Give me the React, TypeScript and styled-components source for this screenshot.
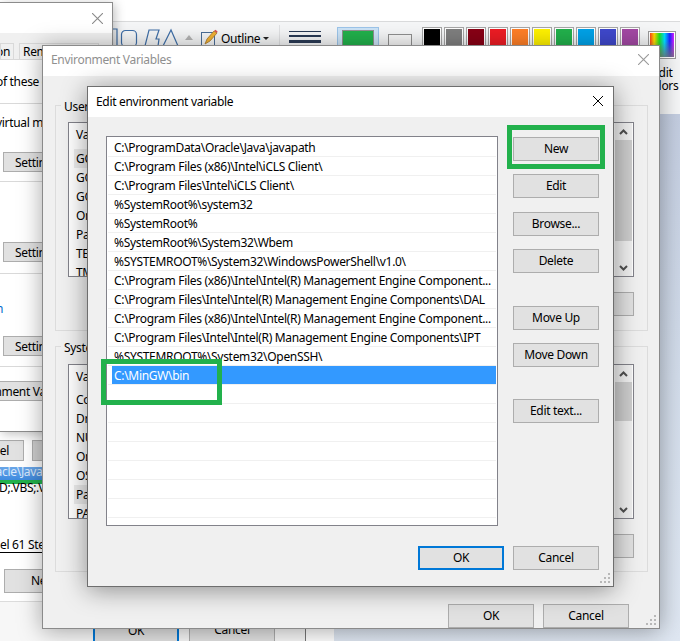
import React from "react";
import styled, { createGlobalStyle } from "styled-components";

const Global = createGlobalStyle`
  html, body { margin: 0; padding: 0; background: #fff; }
  * { box-sizing: border-box; }
  body { font-family: "Noto Sans", "Open Sans", sans-serif; font-size: 12px; color: #000; letter-spacing: -0.31px; }
`;

const Stage = styled.div`
  position: relative;
  width: 680px;
  height: 641px;
  overflow: hidden;
  display: flex;
  flex-direction: column;
  background: #fff;
`;
const TopBlank = styled.div`height: 22px; background: #fff; border-bottom: 1px solid #dadbdc; flex: none;`;
const Ribbon = styled.div`
  height: 92px; flex: none; background: #f5f6f7; display: flex; align-items: flex-start; padding: 5px 0 0 113px; white-space: nowrap;
`;
const Desktop = styled.div`flex: 1; background: linear-gradient(180deg, #c3cde0 0%, #d2dcea 50%, #dfe7f2 100%);`;

const ShapesBox = styled.div`display: flex; width: 68px; margin-top: 1px;`;
const ScrollStep = styled.div`width: 14px; height: 18px; margin-left: 1px; display: flex; justify-content: center; padding-top: 8px;`;
const Tool = styled.div`display: flex; align-items: center; gap: 3px; margin: 1px 0 0 5px; height: 20px; font-size: 12px;`;
const Caret = styled.span`width: 0; height: 0; border: 3px solid transparent; border-top: 3px solid #222; border-bottom: 0; margin-left: 0;`;
const RibbonRule = styled.div`width: 1px; height: 32px; background: #e0e1e3; margin: -2px 9px 0 10px;`;
const LineStack = styled.div`display: flex; flex-direction: column; gap: 3px; width: 32px; padding-top: 4px; margin-right: 16px;`;
const Line = styled.div<{ $h: number }>`height: ${p => p.$h}px; background: #2a3a55;`;
const ActiveColor = styled.div`width: 42px; height: 32px; background: #cde4f7; border: 1px solid #9cc5ea; padding: 3px 5px; margin-right: 9px;`;
const ColorFill = styled.div`height: 100%; background: #22b14c; outline: 1px solid #8f8f8f;`;
const BackColor = styled.div`width: 24px; height: 20px; margin: 7px 10px 0 0; background: #f7f7f7; border: 1px solid #8f8f8f;`;
const Palette = styled.div`display: flex; gap: 2px; margin: 0;`;
const Swatch = styled.div<{ $c: string }>`width: 20px; height: 20px; border: 1px solid #a6a6a6; box-shadow: inset 0 0 0 1px #fff; background: ${p => p.$c};`;
const EditColors = styled.div`display: flex; flex-direction: column; align-items: center; margin: 4px 0 0 7px; width: 30px; line-height: 13px; text-align: center; font-size: 12px; white-space: normal;`;
const Rainbow = styled.div`
  width: 28px; height: 28px; flex: none; border: 1px solid #9a9a9a; outline: 1px solid #fff; outline-offset: -2px; margin-bottom: 7px;
  background: linear-gradient(180deg, transparent 0%, transparent 35%, rgba(120,120,120,.85) 100%),
    linear-gradient(90deg, #ff2020, #ffd800, #20e020, #00d8ff, #2020ff, #ff20ff);
`;

const TopDialog = styled.div`
  position: absolute; left: 0; top: 2px; width: 113px; height: 430px; background: #fff;
  border: 1px solid #8c8c8c; border-left: 0; box-shadow: 2px 2px 10px rgba(0,0,0,.25); display: flex; flex-direction: column; white-space: nowrap; overflow: hidden;
`;
const TopTitle = styled.div`height: 30px; flex: none; display: flex; justify-content: flex-end; align-items: center; padding-right: 9px;`;
const TabBand = styled.div`height: 27px; flex: none; background: #f0f0f0; display: flex; gap: 5px; padding-top: 10px; border-bottom: 1px solid #d9d9d9;`;
const Tab = styled.div<{ $w: number }>`
  width: ${p => p.$w}px; height: 17px; line-height: 16px; border: 1px solid #d9d9d9; border-bottom: 0; overflow: hidden; display: flex; justify-content: flex-end; padding: 0 3px;
`;
const TabWide = styled.div<{ $w: number }>`
  width: ${p => p.$w}px; height: 17px; line-height: 16px; border: 1px solid #d9d9d9; border-bottom: 0; overflow: hidden; padding: 0 3px;
`;
const Section = styled.div<{ $h: number; $last?: boolean }>`
  height: ${p => p.$h}px; flex: none; position: relative; overflow: hidden; display: flex; flex-direction: column;
  border-bottom: ${p => (p.$last ? "0" : "1px solid #d9d9d9")};
`;
const ClipText = styled.div<{ $top: number; $link?: boolean }>`
  margin: ${p => p.$top}px 0 0 -4px; height: 16px; line-height: 16px; color: ${p => (p.$link ? "#0066cc" : "#000")};
`;
const BackButton = styled.div<{ $top: number; $left?: number; $w?: number; $h?: number; $indent?: number }>`
  flex: none; margin: ${p => p.$top}px 0 0 ${p => p.$left ?? 3}px; width: ${p => p.$w ?? 60}px; height: ${p => p.$h ?? 20}px;
  background: #e1e1e1; border: 1px solid #adadad; line-height: 19px; text-indent: ${p => p.$indent ?? 11}px; overflow: hidden;
`;
const LowerDialog = styled.div`
  position: absolute; left: 0; top: 432px; width: 306px; height: 209px; background: #f7f7f7; border-right: 1px solid #777;
  box-shadow: 28px 0 0 #fff; display: flex; flex-direction: column; white-space: nowrap;
`;
const LowerWhite = styled.div`height: 170px; flex: none; background: #fff; display: flex; flex-direction: column; border-bottom: 1px solid #dcdcdc; overflow: hidden;`;
const ButtonRow = styled.div`display: flex; gap: 8px; margin-top: 8px;`;
const HiddenBtn = styled.div<{ $w: number; $dark?: boolean }>`
  width: ${p => p.$w}px; height: 21px; border: 1px solid #adadad; border-left: ${p => (p.$dark ? "1px solid #adadad" : "0")}; background: ${p => (p.$dark ? "#cfcfcf" : "#e1e1e1")}; line-height: 19px; display: flex; justify-content: flex-end; padding-right: 14px; overflow: hidden;
`;
const BlueStrip = styled.div`height: 13px; margin-top: 6px; background: linear-gradient(180deg, #6aa6e8, #3f8be0); color: #d9e8fb; line-height: 10px; overflow: hidden; text-indent: -22px;`;
const GreenStrip = styled.div`height: 4px; background: #22b14c;`;
const PathText = styled.div`line-height: 14px; height: 14px; margin-top: -3px; margin-left: -1px;`;
const ModelText = styled.div`margin-top: 43px; height: 15px; line-height: 14px; margin-left: 0; border-bottom: 1px solid #000;`;
const LowerNew = styled.div`margin: 16px 0 0 4px; width: 90px; height: 24px; background: #e1e1e1; border: 1px solid #adadad; line-height: 22px; padding-left: 26px;`;
const LowerFooter = styled.div`display: flex; gap: 10px; margin: 17px 0 0 93px;`;
const FootBtn = styled.div<{ $primary?: boolean }>`
  width: 86px; height: 24px; background: #e1e1e1; text-align: center; line-height: 20px;
  border: ${p => (p.$primary ? "2px solid #0078d7" : "1px solid #adadad")};
`;

const EnvWindow = styled.div`
  position: absolute; left: 42px; top: 45px; width: 618px; height: 584px; background: #f0f0f0; border: 1px solid #8a8a8a;
  box-shadow: 0 2px 22px rgba(0,0,0,.35); display: flex; flex-direction: column;
`;
const TitleBar = styled.div<{ $inactive?: boolean }>`
  height: 30px; flex: none; background: #fff; display: flex; align-items: center; justify-content: space-between;
  padding: 0 10px ${p => (p.$inactive ? 3 : 2)}px 8px;
  color: ${p => (p.$inactive ? "#909090" : "#000")};
`;
const EnvBody = styled.div`flex: 1; display: flex; flex-direction: column; gap: 15px; padding: 29px 0 0 12px;`;
const Group = styled.div`width: 593px; height: 226px; border: 1px solid #dcdcdc; display: flex; flex-direction: column; align-items: flex-start; flex: none;`;
const Legend = styled.div`height: 16px; margin: -8px 0 0 5px; padding: 0 3px; background: #f0f0f0; line-height: 17px;`;
const VarList = styled.div<{ $top: number }>`
  width: 566px; height: 155px; margin: ${p => p.$top}px 0 0 12px; flex: none; background: #fff; border: 1px solid #82828a; display: flex; justify-content: space-between; overflow: hidden;
`;
const VarTable = styled.div`padding-left: 5px; width: 300px;`;
const VarHead = styled.div<{ $h: number }>`height: ${p => p.$h}px; line-height: 24px; padding-left: 2px;`;
const VarRow = styled.div<{ $hot?: boolean }>`height: 19px; line-height: 19px; padding-left: 2px; background: ${p => (p.$hot ? "#ececec" : "transparent")};`;
const ScrollBar = styled.div`width: 17px; margin: 0 1px 0 0; background: #f0f0f0; display: flex; flex-direction: column; align-items: center;`;
const ScrollArrow = styled.div`height: 17px; flex: none; display: flex; align-items: center; justify-content: center; width: 100%;`;
const ScrollTrack = styled.div`flex: 1; width: 100%; display: flex; flex-direction: column;`;
const ScrollThumb = styled.div<{ $h: number }>`height: ${p => p.$h}px; background: #cdcdcd; flex: none;`;
const GroupActions = styled.div`width: 578px; display: flex; justify-content: flex-end; margin-top: 15px;`;
const EnvFooter = styled.div`display: flex; justify-content: flex-end; gap: 9px; padding-right: 30px; margin-top: 3px;`;
const Btn = styled.button<{ $top?: number; $primary?: boolean }>`
  display: block; width: 86px; height: 24px; flex: none; margin: ${p => p.$top ?? 0}px 0 0; padding: 0 0 2px; font: inherit; letter-spacing: inherit; color: #000;
  background: #e1e1e1; border: ${p => (p.$primary ? "2px solid #0078d7" : "1px solid #adadad")}; border-radius: 0;
`;
const Grip = styled.svg`position: absolute; right: 2px; bottom: 2px;`;

const EditWindow = styled.div`
  position: absolute; left: 87px; top: 86px; width: 527px; height: 501px; background: #f0f0f0; border: 1px solid #6e6e6e;
  box-shadow: 0 3px 24px rgba(0,0,0,.42); display: flex; flex-direction: column;
`;
const EditBody = styled.div`display: grid; grid-template-columns: 392px 86px; column-gap: 15px; padding: 19px 0 0 18px;`;
const PathList = styled.div`
  height: 390px; background: #fff; border: 1px solid #82828a; padding: 1px 1px 0; overflow: hidden;
`;
const PathRow = styled.div`height: 19px; margin-left: 0; padding-left: 4px; border-bottom: 1px solid #f0f0f0; display: flex; white-space: nowrap;`;
const PathLabel = styled.div<{ $sel?: boolean }>`
  flex: 1; height: 18px; line-height: 20px; padding-left: 2px; overflow: hidden; background: ${p => (p.$sel ? "#3399ff" : "transparent")}; color: ${p => (p.$sel ? "#fff" : "#000")};
`;
const ActionColumn = styled.div`display: flex; flex-direction: column; padding-top: 1px;`;
const EditFooter = styled.div`display: flex; justify-content: flex-end; gap: 9px; padding: 20px 14px 0 0;`;
const Highlight = styled.div`position: absolute; border: 5px solid #22b14c; pointer-events: none;`;
const NewHighlight = styled(Highlight)`left: 507px; top: 125px; width: 98px; height: 44px;`;
const PathHighlight = styled(Highlight)`left: 101px; top: 359px; width: 121px; height: 46px;`;

const Close = ({ c = "#000", s = 10 }: { c?: string; s?: number }) => (
  <svg width={s} height={s} viewBox="0 0 10 10"><path d="M0 0 10 10M10 0 0 10" stroke={c} strokeWidth="1" fill="none" /></svg>
);
const Chev = ({ up }: { up?: boolean }) => (
  <svg width="9" height="6" viewBox="0 0 9 6"><path d={up ? "M1 5 4.5 1.5 8 5" : "M1 1 4.5 4.5 8 1"} stroke="#505050" strokeWidth="2" fill="none" /></svg>
);
const GripIcon = () => (
  <Grip width="11" height="11" viewBox="0 0 11 11">
    {[[8, 0], [4, 4], [8, 4], [0, 8], [4, 8], [8, 8]].map(([x, y]) => <rect key={`${x}-${y}`} x={x} y={y} width="2" height="2" fill="#b8b8b8" />)}
  </Grip>
);
const Shapes = () => (
  <svg width="68" height="18" viewBox="0 0 68 18" fill="none" stroke="#3f6fa8" strokeWidth="1.2">
    <path d="M-4 1H4V18" />
    <rect x="8.5" y="2.5" width="15" height="16" rx="4" />
    <path d="M32 18 36 2H46L43 11H46L45 18" />
    <path d="M50 18 58 2 65 18" />
  </svg>
);
const Pencil = () => (
  <svg width="17" height="18" viewBox="0 0 17 18" fill="none">
    <rect x="0.5" y="3.5" width="13" height="13" stroke="#4a6d96" />
    <path d="M4 15 6 10 13 2 16 4 9 12Z" fill="#f2b233" stroke="#a9782a" strokeWidth=".8" />
    <path d="M13 2 14.5 .8 16.6 2.5 16 4Z" fill="#d9534f" />
  </svg>
);

const paths = [
  "C:\\ProgramData\\Oracle\\Java\\javapath",
  "C:\\Program Files (x86)\\Intel\\iCLS Client\\",
  "C:\\Program Files\\Intel\\iCLS Client\\",
  "%SystemRoot%\\system32",
  "%SystemRoot%",
  "%SystemRoot%\\System32\\Wbem",
  "%SYSTEMROOT%\\System32\\WindowsPowerShell\\v1.0\\",
  "C:\\Program Files (x86)\\Intel\\Intel(R) Management Engine Component...",
  "C:\\Program Files\\Intel\\Intel(R) Management Engine Components\\DAL",
  "C:\\Program Files (x86)\\Intel\\Intel(R) Management Engine Component...",
  "C:\\Program Files\\Intel\\Intel(R) Management Engine Components\\IPT",
  "%SYSTEMROOT%\\System32\\OpenSSH\\",
  "C:\\MinGW\\bin",
  "", "", "", "", "", "", "", "",
];
const palette = ["#000000", "#7f7f7f", "#880015", "#ed1c24", "#ff7f27", "#fff200", "#22b14c", "#00a2e8", "#3f48cc", "#a349a4"];
const userVars = ["GCC", "GOPATH", "GOROOT", "OneDrive", "Path", "TEMP", "TMP"];
const systemVars = ["ComSpec", "DriverData", "NUMBER", "OnlineServices", "OS", "Path", "PATHEXT"];

const actions: [string, number][] = [["New", 0], ["Edit", 13], ["Browse...", 14], ["Delete", 13], ["Move Up", 33], ["Move Down", 13], ["Edit text...", 32]];

export default function App() {
  return (
    <Stage>
      <Global />
      <TopBlank />
      <Ribbon>
        <ShapesBox><Shapes /></ShapesBox>
        <ScrollStep><svg width="8" height="5" viewBox="0 0 8 5"><path d="M4 0 8 5H0Z" fill="#b4b4b4" /></svg></ScrollStep>
        <Tool><Pencil /><span>Outline</span><Caret /></Tool>
        <RibbonRule />
        <LineStack><Line $h={1} /><Line $h={2} /><Line $h={3} /></LineStack>
        <ActiveColor><ColorFill /></ActiveColor>
        <BackColor />
        <Palette>{palette.map(c => <Swatch key={c} $c={c} />)}</Palette>
        <EditColors><Rainbow />Edit colors</EditColors>
      </Ribbon>
      <Desktop />

      <LowerDialog>
        <LowerWhite>
          <ButtonRow><HiddenBtn $w={24}>Cancel</HiddenBtn><HiddenBtn $w={40} $dark /></ButtonRow>
          <BlueStrip>\Oracle\Java\javapath</BlueStrip>
          <GreenStrip />
          <PathText>D;.VBS;.VBE;.JS</PathText>
          <ModelText>el 61 Stepping 4, Genuine</ModelText>
          <LowerNew>New...</LowerNew>
        </LowerWhite>
        <LowerFooter><FootBtn $primary>OK</FootBtn><FootBtn>Cancel</FootBtn></LowerFooter>
      </LowerDialog>

      <TopDialog>
        <TopTitle><Close c="#8a8a8a" s={11} /></TopTitle>
        <TabBand><Tab $w={14}>on</Tab><TabWide $w={80}>Remote</TabWide></TabBand>
        <Section $h={44}><ClipText $top={14}>of these changes</ClipText></Section>
        <Section $h={78}>
          <ClipText $top={11}>virtual memory</ClipText>
          <BackButton $top={21}>Settings...</BackButton>
        </Section>
        <Section $h={92}><BackButton $top={60}>Settings...</BackButton></Section>
        <Section $h={93}>
          <ClipText $top={27} $link>n</ClipText>
          <BackButton $top={19}>Settings...</BackButton>
        </Section>
        <Section $h={62} $last>
          <BackButton $top={14} $left={-2} $w={180} $indent={-38}>Environment Variables...</BackButton>
        </Section>
      </TopDialog>

      <EnvWindow>
        <TitleBar $inactive>Environment Variables<Close c="#9a9a9a" s={11} /></TitleBar>
        <EnvBody>
          <Group>
            <Legend>User variables</Legend>
            <VarList $top={8}>
              <VarTable>
                <VarHead $h={26}>Variable</VarHead>
                {userVars.map((v, i) => <VarRow key={v} $hot={i === 0}>{v}</VarRow>)}
              </VarTable>
              <ScrollBar>
                <ScrollArrow><Chev up /></ScrollArrow>
                <ScrollTrack><ScrollThumb $h={101} /></ScrollTrack>
                <ScrollArrow><Chev /></ScrollArrow>
              </ScrollBar>
            </VarList>
            <GroupActions><Btn>Delete</Btn></GroupActions>
          </Group>
          <Group>
            <Legend>System variables</Legend>
            <VarList $top={9}>
              <VarTable>
                <VarHead $h={25}>Variable</VarHead>
                {systemVars.map((v, i) => <VarRow key={v} $hot={i === 5}>{v}</VarRow>)}
              </VarTable>
              <ScrollBar>
                <ScrollArrow><Chev up /></ScrollArrow>
                <ScrollTrack><ScrollThumb $h={39} /></ScrollTrack>
                <ScrollArrow><Chev /></ScrollArrow>
              </ScrollBar>
            </VarList>
            <GroupActions><Btn>Delete</Btn></GroupActions>
          </Group>
        </EnvBody>
        <EnvFooter><Btn $top={15}>OK</Btn><Btn $top={15}>Cancel</Btn></EnvFooter>
        <GripIcon />
      </EnvWindow>

      <EditWindow>
        <TitleBar>Edit environment variable<Close /></TitleBar>
        <EditBody>
          <PathList>
            {paths.map((p, i) => <PathRow key={i}><PathLabel $sel={i === 12}>{p}</PathLabel></PathRow>)}
          </PathList>
          <ActionColumn>
            {actions.map(([label, top]) => <Btn key={label} $top={top}>{label}</Btn>)}
          </ActionColumn>
        </EditBody>
        <EditFooter><Btn $primary>OK</Btn><Btn>Cancel</Btn></EditFooter>
        <GripIcon />
      </EditWindow>

      <NewHighlight />
      <PathHighlight />
    </Stage>
  );
}
